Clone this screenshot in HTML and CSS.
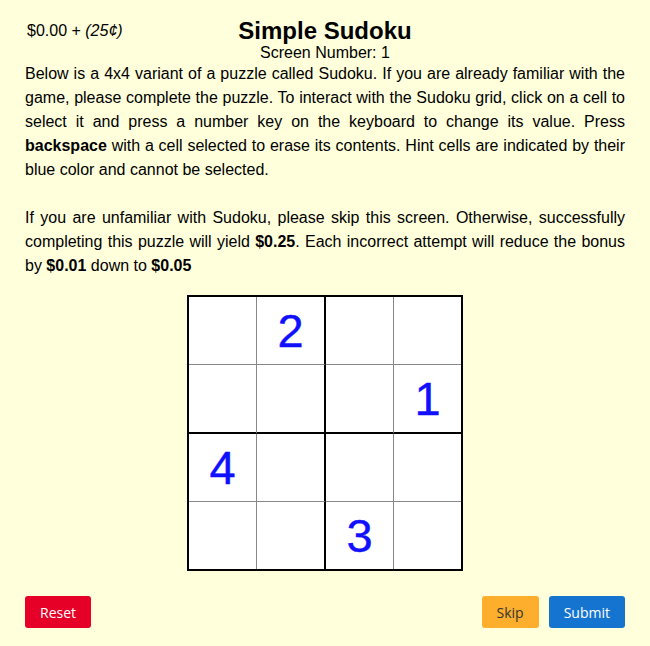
FILE: index.html
```html
<!DOCTYPE html>
<html>
<head>
<meta charset="utf-8">
<link rel="stylesheet" href="styles.css">
</head>
<body>
<div class="page">
  <div class="header">
    <div class="money">$0.00 + <i>(25¢)</i></div>
    <div class="titles">
      <h1 class="title">Simple Sudoku</h1>
      <div class="screen">Screen Number: 1</div>
    </div>
    <div></div>
  </div>
  <p class="para">Below is a 4x4 variant of a puzzle called Sudoku. If you are already familiar with the game, please complete the puzzle. To interact with the Sudoku grid, click on a cell to select it and press a number key on the keyboard to change its value. Press <b>backspace</b> with a cell selected to erase its contents. Hint cells are indicated by their blue color and cannot be selected.</p>
  <p class="para second">If you are unfamiliar with Sudoku, please skip this screen. Otherwise, successfully completing this puzzle will yield <b>$0.25</b>. Each incorrect attempt will reduce the bonus by <b>$0.01</b> down to <b>$0.05</b></p>
  <div class="board">
    <div class="cell"></div><div class="cell mid">2</div><div class="cell"></div><div class="cell last"></div>
    <div class="cell band"></div><div class="cell mid band"></div><div class="cell band"></div><div class="cell last band">1</div>
    <div class="cell">4</div><div class="cell mid"></div><div class="cell"></div><div class="cell last"></div>
    <div class="cell bottom"></div><div class="cell mid bottom"></div><div class="cell bottom">3</div><div class="cell last bottom"></div>
  </div>
  <div class="actions">
    <button class="btn reset">Reset</button>
    <div class="right">
      <button class="btn skip">Skip</button>
      <button class="btn submit">Submit</button>
    </div>
  </div>
</div>
</body>
</html>
```
FILE: styles.css
```css
html, body {
  margin: 0;
  padding: 0;
  background: #ffffdc;
}
body {
  font-family: "Liberation Sans", Arial, sans-serif;
  color: #000;
}
.page {
  width: 600px;
  margin: 0 auto;
  padding: 0 25px;
}
.header {
  display: grid;
  grid-template-columns: 1fr auto 1fr;
  align-items: start;
}
.money {
  font-size: 16px;
  line-height: 18px;
  padding-top: 22px;
  padding-left: 2px;
}
.titles {
  text-align: center;
}
.title {
  margin: 0;
  padding-top: 19px;
  font-size: 24px;
  line-height: 24px;
  font-weight: bold;
}
.screen {
  font-size: 16px;
  line-height: 19px;
}
.para {
  margin: 0;
  font-size: 16px;
  line-height: 24px;
  text-align: justify;
}
.second {
  margin-top: 24px;
}
.board {
  display: grid;
  grid-template-columns: repeat(4, auto);
  width: max-content;
  margin: 17px auto 0;
  border: 2px solid #000;
  background: #fff;
}
.cell {
  width: 67px;
  height: 67px;
  box-sizing: content-box;
  border-right: 1px solid #888;
  border-bottom: 1px solid #888;
  display: flex;
  align-items: center;
  justify-content: center;
  font-size: 47px;
  color: #1010ff;
  line-height: 1;
  -webkit-text-stroke: 0.4px #1010ff;
}
.cell.mid {
  border-right: 2px solid #000;
}
.cell.last {
  border-right: none;
}
.cell.band {
  border-bottom: 2px solid #000;
}
.cell.bottom {
  border-bottom: none;
}
.actions {
  display: flex;
  justify-content: space-between;
  margin-top: 25px;
}
.right {
  display: flex;
  gap: 10px;
}
.btn {
  font-family: "Open Sans", "Noto Sans", sans-serif;
  font-size: 14px;
  height: 32px;
  padding: 0 15px;
  border: none;
  border-radius: 3px;
  color: #fff;
}
.reset {
  background: #e60028;
}
.skip {
  background: #fcae2c;
  color: #333;
}
.submit {
  background: #1674d1;
}
```
